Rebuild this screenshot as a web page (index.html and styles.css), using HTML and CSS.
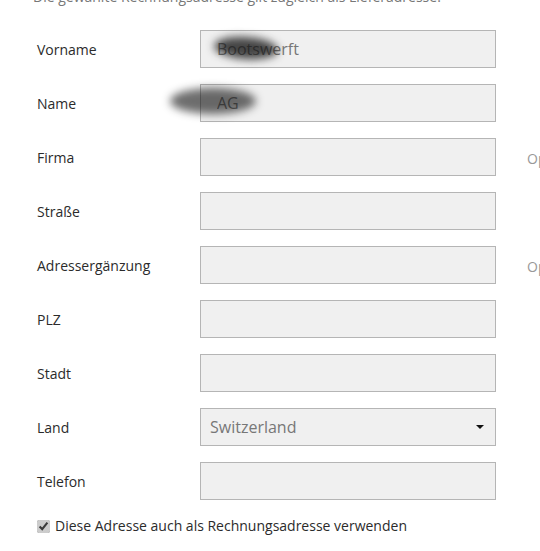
FILE: index.html
```html
<!DOCTYPE html>
<html lang="de">
<head>
<meta charset="utf-8">
<link rel="stylesheet" href="styles.css">
</head>
<body>
<p class="note">Die gewählte Rechnungsadresse gilt zugleich als Lieferadresse.</p>
<form class="form">
  <div class="row">
    <label class="label">Vorname</label>
    <div class="field"><input class="input" value="Bootswerft"><span class="smudge smudge-1"></span></div>
  </div>
  <div class="row">
    <label class="label">Name</label>
    <div class="field"><input class="input" value="AG"><span class="smudge smudge-2"></span></div>
  </div>
  <div class="row">
    <label class="label">Firma</label>
    <div class="field"><input class="input"></div>
    <span class="hint">Optional</span>
  </div>
  <div class="row">
    <label class="label">Straße</label>
    <div class="field"><input class="input"></div>
  </div>
  <div class="row">
    <label class="label">Adressergänzung</label>
    <div class="field"><input class="input"></div>
    <span class="hint">Optional</span>
  </div>
  <div class="row">
    <label class="label">PLZ</label>
    <div class="field"><input class="input"></div>
  </div>
  <div class="row">
    <label class="label">Stadt</label>
    <div class="field"><input class="input"></div>
  </div>
  <div class="row">
    <label class="label">Land</label>
    <div class="field">
      <div class="select"><span>Switzerland</span><span class="caret"></span></div>
    </div>
  </div>
  <div class="row">
    <label class="label">Telefon</label>
    <div class="field"><input class="input"></div>
  </div>
  <label class="check"><input type="checkbox" checked class="checkbox"> Diese Adresse auch als Rechnungsadresse verwenden</label>
</form>
</body>
</html>
```
FILE: styles.css
```css
html, body {
  margin: 0;
  padding: 0;
  overflow: hidden;
  background: #fff;
}
body {
  font-family: "Open Sans", "Noto Sans", sans-serif;
  font-size: 14px;
  color: #2b2b2b;
  width: 640px;
}
.note {
  margin: -13px 0 0 33px;
  line-height: 20px;
  color: #777;
  white-space: nowrap;
}
.form {
  margin: 23px 0 0 37px;
  display: flex;
  flex-direction: column;
  gap: 16px;
}
.row {
  display: flex;
  align-items: center;
  height: 38px;
}
.label {
  width: 163px;
  line-height: 20px;
  padding-top: 2px;
}
.field {
  position: relative;
  width: 296px;
  height: 38px;
}
.input, .select {
  box-sizing: border-box;
  width: 296px;
  height: 38px;
  margin: 0;
  border: 1px solid #b5b5b5;
  background: #f0f0f0;
  font-family: "Open Sans", "Noto Sans", sans-serif;
  font-size: 16px;
  color: #777;
  padding: 0 16px;
  outline: none;
  border-radius: 0;
}
.select {
  display: flex;
  align-items: center;
  justify-content: space-between;
  padding: 0 11px 0 9px;
}
.caret {
  width: 0;
  height: 0;
  border-left: 4px solid transparent;
  border-right: 4px solid transparent;
  border-top: 4px solid #111;
}
.hint {
  margin-left: 31px;
  color: #999;
  white-space: nowrap;
  padding-top: 2px;
}
.smudge {
  position: absolute;
  background: rgba(20, 20, 20, 0.78);
  border-radius: 50%;
  filter: blur(4px);
  pointer-events: none;
}
.smudge-1 {
  left: 14px;
  top: 7px;
  width: 64px;
  height: 22px;
  transform: rotate(4deg);
}
.smudge-2 {
  left: -30px;
  top: 4px;
  width: 86px;
  height: 26px;
  background: rgba(20, 20, 20, 0.62);
}
.check {
  display: flex;
  align-items: center;
  gap: 5px;
  margin-top: 0;
  line-height: 20px;
}
.checkbox {
  margin: 0;
  width: 13px;
  height: 13px;
  accent-color: #ccc;
}
```
